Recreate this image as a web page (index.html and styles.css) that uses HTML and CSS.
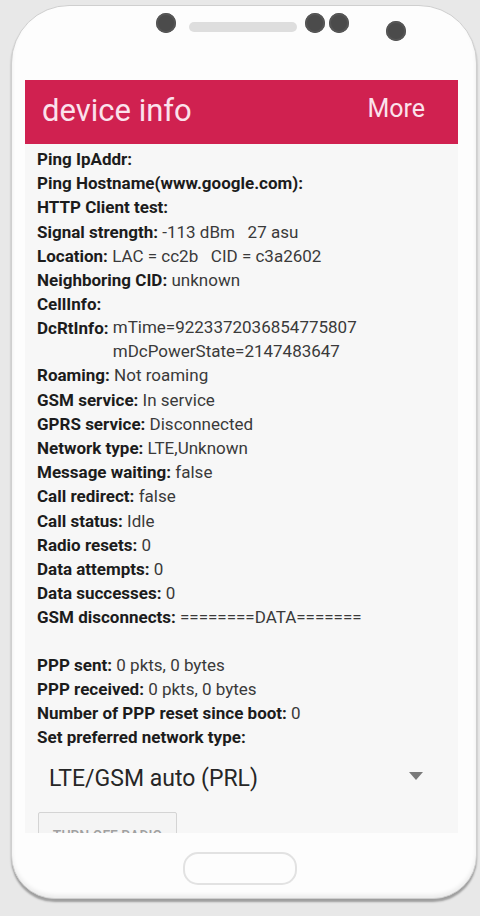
FILE: index.html
```html
<!DOCTYPE html>
<html lang="en">
<head>
<meta charset="utf-8">
<title>device info</title>
<link rel="stylesheet" href="styles.css">
</head>
<body>
<div class="phone">
  <div class="sensors">
    <span class="dot"></span>
    <span class="speaker"></span>
    <span class="dot"></span>
    <span class="dot"></span>
    <span class="dot low"></span>
  </div>
  <div class="screen">
    <div class="appbar">
      <span class="title">device info</span>
      <span class="more">More</span>
    </div>
    <div class="content">
      <div class="row"><b>Ping IpAddr:</b></div>
      <div class="row"><b>Ping Hostname(www.google.com):</b></div>
      <div class="row"><b>HTTP Client test:</b></div>
      <div class="row"><b>Signal strength:</b> -113 dBm&nbsp;&nbsp; 27 asu</div>
      <div class="row"><b>Location:</b> LAC = cc2b&nbsp;&nbsp; CID = c3a2602</div>
      <div class="row"><b>Neighboring CID:</b> unknown</div>
      <div class="row"><b>CellInfo:</b></div>
      <div class="row split"><b>DcRtInfo:</b>&nbsp;<div class="vals"><div>mTime=9223372036854775807</div><div>mDcPowerState=2147483647</div></div></div>
      <div class="row"><b>Roaming:</b> Not roaming</div>
      <div class="row"><b>GSM service:</b> In service</div>
      <div class="row"><b>GPRS service:</b> Disconnected</div>
      <div class="row"><b>Network type:</b> LTE,Unknown</div>
      <div class="row"><b>Message waiting:</b> false</div>
      <div class="row"><b>Call redirect:</b> false</div>
      <div class="row"><b>Call status:</b> Idle</div>
      <div class="row"><b>Radio resets:</b> 0</div>
      <div class="row"><b>Data attempts:</b> 0</div>
      <div class="row"><b>Data successes:</b> 0</div>
      <div class="row"><b>GSM disconnects:</b> ========DATA=======</div>
      <div class="gap"></div>
      <div class="row"><b>PPP sent:</b> 0 pkts, 0 bytes</div>
      <div class="row"><b>PPP received:</b> 0 pkts, 0 bytes</div>
      <div class="row"><b>Number of PPP reset since boot:</b> 0</div>
      <div class="row"><b>Set preferred network type:</b></div>
      <div class="spinner">
        <span class="choice">LTE/GSM auto (PRL)</span>
        <span class="arrow"></span>
      </div>
      <div class="button">TURN OFF RADIO</div>
    </div>
  </div>
  <div class="home"></div>
</div>
</body>
</html>
```

FILE: styles.css
```css
html, body {
  margin: 0;
  padding: 0;
}
body {
  width: 480px;
  height: 916px;
  overflow: hidden;
  background: #e8e8e8;
  font-family: Roboto, "Liberation Sans", sans-serif;
}
.phone {
  box-sizing: border-box;
  margin: 5px 0 0 11px;
  width: 466px;
  height: 894px;
  background: #fdfdfd;
  border: 1px solid #cfcfcf;
  border-radius: 58px 58px 44px 44px;
  box-shadow: 0 3px 2px rgba(0, 0, 0, 0.32), inset 0 -3px 4px rgba(0, 0, 0, 0.07);
  display: flex;
  flex-direction: column;
}
.sensors {
  box-sizing: border-box;
  height: 74px;
  padding: 7px 0 0 144px;
  display: flex;
  align-items: flex-start;
}
.dot {
  width: 20px;
  height: 20px;
  border-radius: 50%;
  background: #4b4b4b;
  box-shadow: inset 0 0 0 2px #565656;
  margin-right: 4px;
}
.sensors .dot:first-child {
  margin-right: 13px;
}
.speaker {
  width: 108px;
  height: 10px;
  margin-top: 9px;
  margin-right: 8px;
  border-radius: 5px;
  background: #dedede;
}
.dot.low {
  margin-left: 33px;
  margin-top: 8px;
}
.screen {
  margin-left: 13px;
  width: 433px;
  height: 753px;
  background: #f7f7f7;
  overflow: hidden;
}
.appbar {
  height: 64px;
  background: #d02150;
  display: flex;
  align-items: center;
  justify-content: space-between;
  padding: 0 33px 0 17px;
  color: #fbe2ec;
}
.title {
  font-size: 31px;
  line-height: 1;
  margin-top: -3px;
}
.more {
  font-size: 25px;
  line-height: 1;
  margin-top: -8px;
}
.content {
  padding: 3px 12px 0 12px;
  color: #3a3a3a;
  font-size: 17px;
}
.row {
  line-height: 24.2px;
  white-space: nowrap;
}
.row b {
  color: #1c1c1c;
  font-weight: 700;
}
.split {
  display: flex;
}
.vals div {
  line-height: 23.5px;
}
.gap {
  height: 23px;
}
.spinner {
  margin-top: 5px;
  height: 48px;
  display: flex;
  align-items: center;
  justify-content: space-between;
  padding: 0 23px 0 12px;
}
.choice {
  font-size: 23px;
  color: #262626;
}
.arrow {
  width: 0;
  height: 0;
  border-left: 7.5px solid transparent;
  border-right: 7.5px solid transparent;
  border-top: 8px solid #7a7a7a;
  margin-top: -4px;
}
.button {
  margin: 10px 0 0 1px;
  box-sizing: border-box;
  width: 139px;
  height: 40px;
  border: 1.5px solid #d4d4d4;
  border-radius: 2px;
  background: #f4f4f4;
  color: #a0a0a0;
  font-size: 14px;
  font-weight: 500;
  text-align: center;
  padding-top: 15px;
}
.home {
  margin: 19px 0 0 171px;
  box-sizing: border-box;
  width: 114px;
  height: 33px;
  border: 2px solid #e2e2e2;
  border-radius: 15px;
}
```
